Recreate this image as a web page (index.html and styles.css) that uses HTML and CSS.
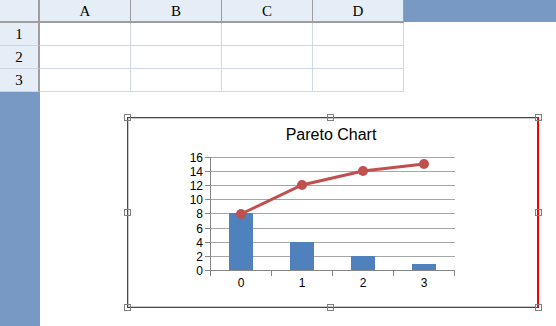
FILE: index.html
```html
<!DOCTYPE html>
<html lang="en">
<head>
    <meta charset="UTF-8">
    <title>Pareto Chart Sheet</title>
    <link rel="stylesheet" href="styles.css">
</head>
<body>
    <div class="sheet">
        <div class="grid">
            <div class="corner"></div>
            <div class="col-head">A</div>
            <div class="col-head">B</div>
            <div class="col-head">C</div>
            <div class="col-head">D</div>
            <div class="filler-top"></div>

            <div class="row-head">1</div>
            <div class="cell"></div><div class="cell"></div><div class="cell"></div><div class="cell"></div>
            <div class="blank"></div>

            <div class="row-head">2</div>
            <div class="cell"></div><div class="cell"></div><div class="cell"></div><div class="cell"></div>
            <div class="blank"></div>

            <div class="row-head">3</div>
            <div class="cell"></div><div class="cell"></div><div class="cell"></div><div class="cell"></div>
            <div class="blank"></div>

            <div class="filler-left"></div>
            <div class="blank-area"></div>
        </div>

        <div class="chart">
            <svg class="plot" width="411" height="191" viewBox="127 117 411 191">
                <text class="title" x="331" y="140">Pareto Chart</text>

                <!-- gridlines -->
                <g class="grid-lines">
                    <line x1="210" y1="157.5" x2="455" y2="157.5"/>
                    <line x1="210" y1="171.5" x2="455" y2="171.5"/>
                    <line x1="210" y1="185.5" x2="455" y2="185.5"/>
                    <line x1="210" y1="199.5" x2="455" y2="199.5"/>
                    <line x1="210" y1="213.5" x2="455" y2="213.5"/>
                    <line x1="210" y1="228.5" x2="455" y2="228.5"/>
                    <line x1="210" y1="242.5" x2="455" y2="242.5"/>
                    <line x1="210" y1="256.5" x2="455" y2="256.5"/>
                </g>

                <!-- bars -->
                <g class="bars">
                    <rect x="229" y="213" width="24" height="58"/>
                    <rect x="290" y="242" width="24" height="29"/>
                    <rect x="351" y="256" width="24" height="15"/>
                    <rect x="412" y="264" width="24" height="7"/>
                </g>

                <!-- axes -->
                <g class="axis">
                    <line x1="210.5" y1="157" x2="210.5" y2="276"/>
                    <line x1="205" y1="270.5" x2="455" y2="270.5"/>
                    <line x1="205" y1="157.5" x2="210" y2="157.5"/>
                    <line x1="205" y1="171.5" x2="210" y2="171.5"/>
                    <line x1="205" y1="185.5" x2="210" y2="185.5"/>
                    <line x1="205" y1="199.5" x2="210" y2="199.5"/>
                    <line x1="205" y1="213.5" x2="210" y2="213.5"/>
                    <line x1="205" y1="228.5" x2="210" y2="228.5"/>
                    <line x1="205" y1="242.5" x2="210" y2="242.5"/>
                    <line x1="205" y1="256.5" x2="210" y2="256.5"/>
                    <line x1="271.5" y1="271" x2="271.5" y2="276"/>
                    <line x1="332.5" y1="271" x2="332.5" y2="276"/>
                    <line x1="393.5" y1="271" x2="393.5" y2="276"/>
                    <line x1="454.5" y1="271" x2="454.5" y2="276"/>
                </g>

                <g class="y-labels">
                    <text x="203" y="162">16</text>
                    <text x="203" y="176">14</text>
                    <text x="203" y="190">12</text>
                    <text x="203" y="204">10</text>
                    <text x="203" y="218">8</text>
                    <text x="203" y="233">6</text>
                    <text x="203" y="247">4</text>
                    <text x="203" y="261">2</text>
                    <text x="203" y="275">0</text>
                </g>

                <g class="x-labels">
                    <text x="241" y="287">0</text>
                    <text x="302" y="287">1</text>
                    <text x="363" y="287">2</text>
                    <text x="424" y="287">3</text>
                </g>

                <!-- cumulative line -->
                <polyline class="line" points="241,214 302,185 363,171 424,164"/>
                <g class="markers">
                    <circle cx="241" cy="214" r="5"/>
                    <circle cx="302" cy="185" r="5"/>
                    <circle cx="363" cy="171" r="5"/>
                    <circle cx="424" cy="164" r="5"/>
                </g>
            </svg>

            <span class="handle tl"></span>
            <span class="handle tm"></span>
            <span class="handle tr"></span>
            <span class="handle ml"></span>
            <span class="handle mr"></span>
            <span class="handle bl"></span>
            <span class="handle bm"></span>
            <span class="handle br"></span>
        </div>
    </div>
</body>
</html>
```

FILE: styles.css
```css
body {
    margin: 0;
    background-color: #fff;
    font-family: "Liberation Serif", "Times New Roman", serif;
}

.sheet {
    position: relative;
    width: 556px;
    height: 326px;
    overflow: hidden;
}

.grid {
    display: grid;
    grid-template-columns: 40px repeat(4, 91px) 1fr;
    grid-template-rows: 23px repeat(3, 23px) 1fr;
    height: 100%;
}

.corner,
.col-head,
.row-head,
.cell {
    box-sizing: border-box;
}

.corner {
    background-color: #e5edf7;
    border-right: 2px solid #9e9e9e;
    border-bottom: 2px solid #9e9e9e;
}

.col-head {
    background-color: #e5edf7;
    border-right: 1px solid #9e9e9e;
    border-bottom: 2px solid #9e9e9e;
    display: flex;
    align-items: center;
    justify-content: center;
    font-size: 15px;
    padding-top: 1px;
}

.filler-top {
    background-color: #7899c3;
    height: 22px;
}

.row-head {
    background-color: #e5edf7;
    border-right: 2px solid #9e9e9e;
    border-bottom: 1px solid #cdd4e0;
    display: flex;
    align-items: center;
    justify-content: center;
    font-size: 15px;
    padding-top: 1px;
}

.cell {
    border-right: 1px solid #d0d7e5;
    border-bottom: 1px solid #d0d7e5;
}

.filler-left {
    background-color: #7899c3;
}

.blank-area {
    grid-column: span 5;
}

.chart {
    position: absolute;
    left: 127px;
    top: 117px;
    width: 412px;
    height: 191px;
}

.plot {
    display: block;
    font-family: "Liberation Sans", Arial, sans-serif;
}

/* selection outline */
.chart::before {
    content: "";
    position: absolute;
    inset: 0;
    border: 1px solid #f00000;
    border-right-width: 2px;
}

.chart::after {
    content: "";
    position: absolute;
    top: 1px;
    left: 1px;
    bottom: 1px;
    right: 4px;
    border: 1px solid #c8c8c8;
    border-right: none;
}

.title {
    font-size: 16px;
    text-anchor: middle;
    fill: #000;
}

.grid-lines line {
    stroke: #a6a6a6;
    stroke-width: 1;
    shape-rendering: crispEdges;
}

.axis line {
    stroke: #868686;
    stroke-width: 1;
    shape-rendering: crispEdges;
}

.bars rect {
    fill: #4f81bd;
}

.y-labels text {
    font-size: 12px;
    text-anchor: end;
    fill: #000;
}

.x-labels text {
    font-size: 12px;
    text-anchor: middle;
    fill: #000;
}

.line {
    fill: none;
    stroke: #c0504d;
    stroke-width: 3;
}

.markers circle {
    fill: #c0504d;
}

.handle {
    position: absolute;
    width: 5px;
    height: 5px;
    border: 1px solid #808080;
    background-color: transparent;
    z-index: 1;
}

.tl { left: -3px; top: -3px; }
.tm { left: 200px; top: -3px; }
.tr { right: -3px; top: -3px; }
.ml { left: -3px; top: 92px; }
.mr { right: -3px; top: 92px; }
.bl { left: -3px; bottom: -3px; }
.bm { left: 200px; bottom: -3px; }
.br { right: -3px; bottom: -3px; }
```
